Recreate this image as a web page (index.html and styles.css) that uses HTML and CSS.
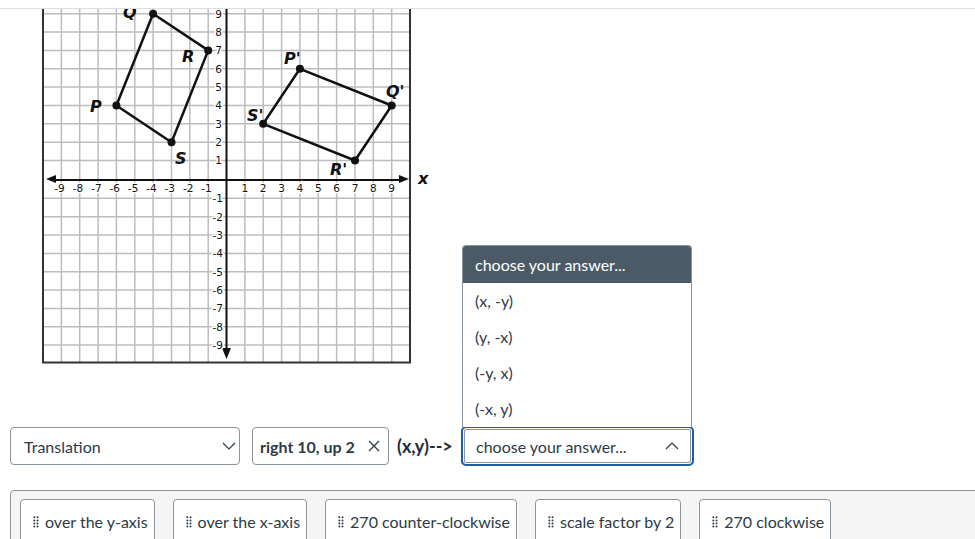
FILE: index.html
```html
<!DOCTYPE html>
<html>
<head>
<meta charset="utf-8">
<link rel="stylesheet" href="styles.css">
</head>
<body>
<div class="topbar"></div>
<div class="graph">
<svg width="395" height="355" viewBox="42 9 395 355" xmlns="http://www.w3.org/2000/svg">
  <rect x="42" y="9" width="370" height="355" fill="#fff"/>
  <g stroke="#bcbcbc" stroke-width="1.5">
    <line x1="61.4" y1="0" x2="61.4" y2="363"/>
    <line x1="79.7" y1="0" x2="79.7" y2="363"/>
    <line x1="98.1" y1="0" x2="98.1" y2="363"/>
    <line x1="116.4" y1="0" x2="116.4" y2="363"/>
    <line x1="134.8" y1="0" x2="134.8" y2="363"/>
    <line x1="153.1" y1="0" x2="153.1" y2="363"/>
    <line x1="171.5" y1="0" x2="171.5" y2="363"/>
    <line x1="189.8" y1="0" x2="189.8" y2="363"/>
    <line x1="208.2" y1="0" x2="208.2" y2="363"/>
    <line x1="244.9" y1="0" x2="244.9" y2="363"/>
    <line x1="263.2" y1="0" x2="263.2" y2="363"/>
    <line x1="281.6" y1="0" x2="281.6" y2="363"/>
    <line x1="299.9" y1="0" x2="299.9" y2="363"/>
    <line x1="318.3" y1="0" x2="318.3" y2="363"/>
    <line x1="336.6" y1="0" x2="336.6" y2="363"/>
    <line x1="355" y1="0" x2="355" y2="363"/>
    <line x1="373.3" y1="0" x2="373.3" y2="363"/>
    <line x1="391.7" y1="0" x2="391.7" y2="363"/>
    <line x1="43" y1="13.7" x2="410" y2="13.7"/>
    <line x1="43" y1="32.1" x2="410" y2="32.1"/>
    <line x1="43" y1="50.4" x2="410" y2="50.4"/>
    <line x1="43" y1="68.8" x2="410" y2="68.8"/>
    <line x1="43" y1="87.1" x2="410" y2="87.1"/>
    <line x1="43" y1="105.5" x2="410" y2="105.5"/>
    <line x1="43" y1="123.8" x2="410" y2="123.8"/>
    <line x1="43" y1="142.2" x2="410" y2="142.2"/>
    <line x1="43" y1="160.5" x2="410" y2="160.5"/>
    <line x1="43" y1="198.3" x2="410" y2="198.3"/>
    <line x1="43" y1="216.7" x2="410" y2="216.7"/>
    <line x1="43" y1="235" x2="410" y2="235"/>
    <line x1="43" y1="253.4" x2="410" y2="253.4"/>
    <line x1="43" y1="271.7" x2="410" y2="271.7"/>
    <line x1="43" y1="290.1" x2="410" y2="290.1"/>
    <line x1="43" y1="308.4" x2="410" y2="308.4"/>
    <line x1="43" y1="326.8" x2="410" y2="326.8"/>
    <line x1="43" y1="345.1" x2="410" y2="345.1"/>
  </g>
  <rect x="43" y="-5" width="367" height="367.5" fill="none" stroke="#333" stroke-width="2"/>
  <g stroke="#111" stroke-width="2">
    <line x1="50" y1="180" x2="402" y2="180"/>
    <line x1="226.5" y1="0" x2="226.5" y2="350"/>
  </g>
  <g fill="#111">
    <polygon points="46,179 56,175 56,183"/>
    <polygon points="409,179 399,175 399,183"/>
    <polygon points="226.5,359 222,348 231,348"/>
  </g>
  <g class="tick" text-anchor="middle">
    <text x="59.5" y="191.5">-9</text>
    <text x="78" y="191.5">-8</text>
    <text x="96.4" y="191.5">-7</text>
    <text x="114.8" y="191.5">-6</text>
    <text x="133.1" y="191.5">-5</text>
    <text x="151.5" y="191.5">-4</text>
    <text x="169.8" y="191.5">-3</text>
    <text x="188.2" y="191.5">-2</text>
    <text x="206.5" y="191.5">-1</text>
    <text x="244.9" y="191.5">1</text>
    <text x="263.2" y="191.5">2</text>
    <text x="281.6" y="191.5">3</text>
    <text x="299.9" y="191.5">4</text>
    <text x="318.3" y="191.5">5</text>
    <text x="336.6" y="191.5">6</text>
    <text x="355" y="191.5">7</text>
    <text x="373.3" y="191.5">8</text>
    <text x="391.7" y="191.5">9</text>
  </g>
  <g class="tick" text-anchor="end">
    <text x="222" y="17.5">9</text>
    <text x="222" y="35.9">8</text>
    <text x="222" y="54.2">7</text>
    <text x="222" y="72.6">6</text>
    <text x="222" y="90.9">5</text>
    <text x="222" y="109.3">4</text>
    <text x="222" y="127.6">3</text>
    <text x="222" y="146">2</text>
    <text x="222" y="164.3">1</text>
    <text x="223" y="202.1">-1</text>
    <text x="223" y="220.5">-2</text>
    <text x="223" y="238.8">-3</text>
    <text x="223" y="257.2">-4</text>
    <text x="223" y="275.5">-5</text>
    <text x="223" y="293.9">-6</text>
    <text x="223" y="312.2">-7</text>
    <text x="223" y="330.6">-8</text>
    <text x="223" y="348.9">-9</text>
  </g>
  <g fill="none" stroke="#111" stroke-width="2.5" stroke-linejoin="round">
    <polygon points="116.4,105.5 153.1,13.7 208.2,50.4 171.5,142.2"/>
    <polygon points="299.9,68.8 391.7,105.5 355,160.5 263.2,123.8"/>
  </g>
  <g fill="#111">
    <circle cx="116.4" cy="105.5" r="4"/>
    <circle cx="153.1" cy="13.7" r="4"/>
    <circle cx="208.2" cy="50.4" r="4"/>
    <circle cx="171.5" cy="142.2" r="4"/>
    <circle cx="299.9" cy="68.8" r="4"/>
    <circle cx="391.7" cy="105.5" r="4"/>
    <circle cx="355" cy="160.5" r="4"/>
    <circle cx="263.2" cy="123.8" r="4"/>
  </g>
  <g class="plabel">
    <text x="90" y="112">P</text>
    <text x="123" y="18">Q</text>
    <text x="182" y="62">R</text>
    <text x="175" y="164">S</text>
    <text x="284" y="64">P'</text>
    <text x="386" y="97">Q'</text>
    <text x="330" y="175">R'</text>
    <text x="247" y="121">S'</text>
    <text x="418" y="184">x</text>
  </g>
</svg>
</div>

<div class="answer-row">
  <div class="select">
    <span>Translation</span>
    <svg class="chev" width="14" height="8" viewBox="0 0 14 8"><polyline points="1,1 7,7 13,1" fill="none" stroke="#2d3b45" stroke-width="1.2"/></svg>
  </div>
  <div class="tag">
    <span>right 10, up 2</span>
    <svg class="x-icon" width="12" height="12" viewBox="0 0 12 12"><path d="M1 1 L11 11 M11 1 L1 11" stroke="#2d3b45" stroke-width="1.3"/></svg>
  </div>
  <div class="arrow-text">(x,y)--&gt;</div>
  <div class="select-wrap">
    <div class="menu">
      <div class="menu-head">choose your answer...</div>
      <div class="menu-item">(x, -y)</div>
      <div class="menu-item">(y, -x)</div>
      <div class="menu-item">(-y, x)</div>
      <div class="menu-item">(-x, y)</div>
    </div>
    <div class="select focused">
      <span>choose your answer...</span>
      <svg class="chev" width="14" height="8" viewBox="0 0 14 8"><polyline points="1,7 7,1 13,7" fill="none" stroke="#2d3b45" stroke-width="1.2"/></svg>
    </div>
  </div>
</div>

<div class="bank">
  <div class="chip"><svg class="grip" width="6" height="12" viewBox="0 0 6 12"><g fill="#2d3b45"><circle cx="1.3" cy="1.3" r="1"/><circle cx="4.5" cy="1.3" r="1"/><circle cx="1.3" cy="4.4" r="1"/><circle cx="4.5" cy="4.4" r="1"/><circle cx="1.3" cy="7.5" r="1"/><circle cx="4.5" cy="7.5" r="1"/><circle cx="1.3" cy="10.6" r="1"/><circle cx="4.5" cy="10.6" r="1"/></g></svg>over the y-axis</div>
  <div class="chip"><svg class="grip" width="6" height="12" viewBox="0 0 6 12"><g fill="#2d3b45"><circle cx="1.3" cy="1.3" r="1"/><circle cx="4.5" cy="1.3" r="1"/><circle cx="1.3" cy="4.4" r="1"/><circle cx="4.5" cy="4.4" r="1"/><circle cx="1.3" cy="7.5" r="1"/><circle cx="4.5" cy="7.5" r="1"/><circle cx="1.3" cy="10.6" r="1"/><circle cx="4.5" cy="10.6" r="1"/></g></svg>over the x-axis</div>
  <div class="chip"><svg class="grip" width="6" height="12" viewBox="0 0 6 12"><g fill="#2d3b45"><circle cx="1.3" cy="1.3" r="1"/><circle cx="4.5" cy="1.3" r="1"/><circle cx="1.3" cy="4.4" r="1"/><circle cx="4.5" cy="4.4" r="1"/><circle cx="1.3" cy="7.5" r="1"/><circle cx="4.5" cy="7.5" r="1"/><circle cx="1.3" cy="10.6" r="1"/><circle cx="4.5" cy="10.6" r="1"/></g></svg>270 counter-clockwise</div>
  <div class="chip"><svg class="grip" width="6" height="12" viewBox="0 0 6 12"><g fill="#2d3b45"><circle cx="1.3" cy="1.3" r="1"/><circle cx="4.5" cy="1.3" r="1"/><circle cx="1.3" cy="4.4" r="1"/><circle cx="4.5" cy="4.4" r="1"/><circle cx="1.3" cy="7.5" r="1"/><circle cx="4.5" cy="7.5" r="1"/><circle cx="1.3" cy="10.6" r="1"/><circle cx="4.5" cy="10.6" r="1"/></g></svg>scale factor by 2</div>
  <div class="chip"><svg class="grip" width="6" height="12" viewBox="0 0 6 12"><g fill="#2d3b45"><circle cx="1.3" cy="1.3" r="1"/><circle cx="4.5" cy="1.3" r="1"/><circle cx="1.3" cy="4.4" r="1"/><circle cx="4.5" cy="4.4" r="1"/><circle cx="1.3" cy="7.5" r="1"/><circle cx="4.5" cy="7.5" r="1"/><circle cx="1.3" cy="10.6" r="1"/><circle cx="4.5" cy="10.6" r="1"/></g></svg>270 clockwise</div>
</div>
</body>
</html>
```

FILE: styles.css
```css
html, body {
  margin: 0;
  padding: 0;
  background: #fff;
  overflow: hidden;
}
body {
  width: 975px;
  height: 539px;
  font-family: Lato, "Liberation Sans", sans-serif;
  color: #2d3b45;
  font-size: 16px;
}
.topbar {
  height: 8px;
  border-bottom: 1px solid #dcdfe1;
}
.graph {
  margin-left: 42px;
  height: 355px;
}
.graph svg {
  display: block;
}
.tick text {
  font-family: "DejaVu Sans", Verdana, sans-serif;
  font-size: 10.5px;
  fill: #111;
  stroke: #fff;
  stroke-width: 3px;
  paint-order: stroke;
}
.plabel text {
  font-family: "DejaVu Sans", Verdana, sans-serif;
  font-weight: bold;
  font-style: italic;
  font-size: 16px;
  fill: #111;
}
.answer-row {
  margin-top: 62px;
  margin-left: 10px;
  display: flex;
  align-items: center;
  height: 40px;
}
.select {
  box-sizing: border-box;
  width: 230px;
  height: 38px;
  border: 1px solid #8a959e;
  border-radius: 4px;
  display: flex;
  align-items: center;
  justify-content: space-between;
  padding: 0 3px 0 13px;
  background: #fff;
  flex: none;
}
.tag {
  box-sizing: border-box;
  margin-left: 12px;
  width: 137px;
  height: 38px;
  border: 1px solid #8a959e;
  border-radius: 4px;
  display: flex;
  align-items: center;
  justify-content: space-between;
  padding: 0 8px 0 7px;
  font-weight: bold;
  white-space: nowrap;
  flex: none;
}
.arrow-text {
  margin-left: 8px;
  width: 60px;
  flex: none;
  font-weight: bold;
  font-size: 18px;
  color: #1f2b33;
  white-space: nowrap;
}
.select-wrap {
  position: relative;
  margin-left: 4px;
  flex: none;
}
.select.focused {
  width: 233px;
  height: 40px;
  border: 2px solid #1b5fa0;
  border-radius: 5px;
  box-shadow: inset 0 0 0 1px #fff, inset 0 0 0 2px #8a959e;
  padding: 0 13px 0 13px;
}
.menu {
  position: absolute;
  left: 1px;
  bottom: 39px;
  width: 230px;
  box-sizing: border-box;
  border: 1px solid #8a959e;
  border-bottom: none;
  border-radius: 4px 4px 0 0;
  background: #fff;
  overflow: hidden;
}
.menu-head {
  background: #4a5a66;
  color: #fff;
  height: 37px;
  line-height: 37px;
  padding-left: 12px;
}
.menu-item {
  height: 36px;
  line-height: 36px;
  padding-left: 12px;
}
.bank {
  margin-top: 24px;
  margin-left: 10px;
  width: 1000px;
  height: 60px;
  box-sizing: border-box;
  border: 1px solid #8a959e;
  border-radius: 4px;
  background: #f5f5f5;
  padding: 8px 0 0 9px;
  display: flex;
  gap: 18px;
}
.chip {
  box-sizing: border-box;
  height: 46px;
  border: 1px solid #8a959e;
  border-radius: 4px;
  background: #fff;
  padding: 12px 6px 0 12px;
  display: flex;
  align-items: flex-start;
  white-space: nowrap;
}
.grip {
  display: block;
  flex: none;
  margin: 4px 6px 0 0;
}
```
